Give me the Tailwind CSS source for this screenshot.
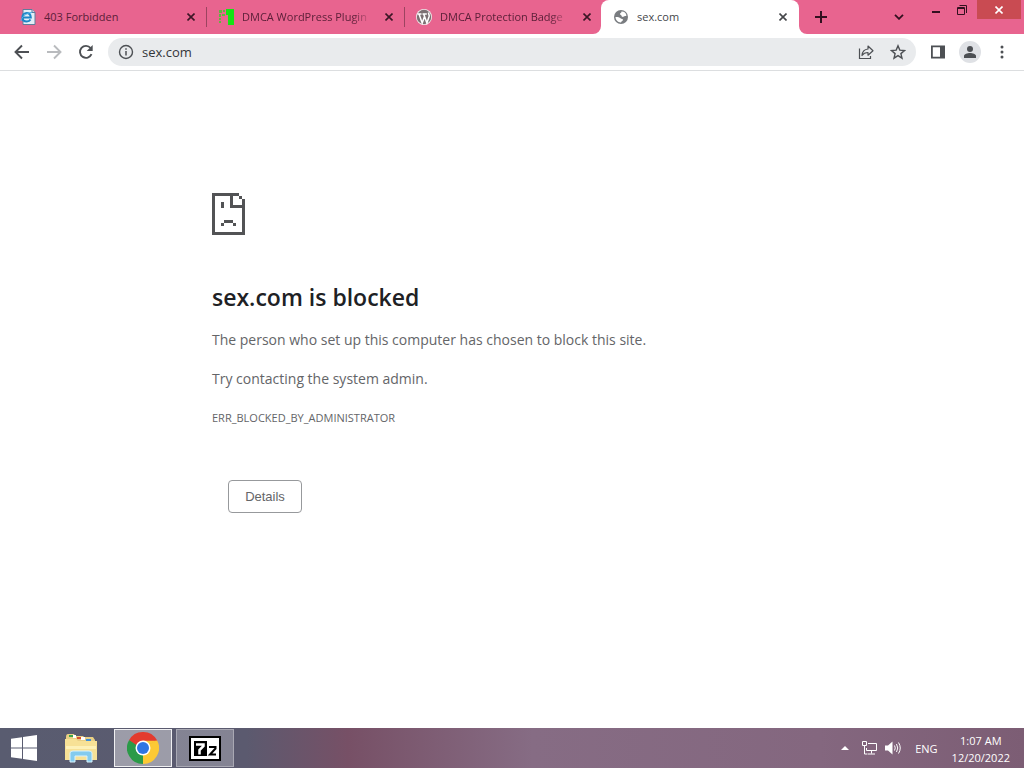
<!DOCTYPE html>
<html lang="en">
<head>
  <meta charset="UTF-8">
  <title>sex.com</title>
  <meta name="viewport" content="width=device-width, initial-scale=1">
  <script src="https://cdn.jsdelivr.net/npm/@tailwindcss/browser@4"></script>
</head>
<body class="min-h-screen flex flex-col bg-white font-['Open_Sans','Noto_Sans',sans-serif] text-[#202124]">

  <!-- Tab strip -->
  <header class="flex h-[34px] bg-[#e8648f] pl-[7px] text-[11px] text-[#5c2039]">
    <div class="flex w-[198px] items-center pl-[13px]">
      <svg class="size-4 shrink-0" viewBox="0 0 16 16">
        <path d="M3 .5h9l3 3v12H3z" fill="#e3eef7" stroke="#5f7d9c"/>
        <path d="M12 .5v3h3" fill="#cfdbe6" stroke="#5f7d9c"/>
        <path d="M2.500 8.500h8.300C10.600 5.300 8.800 4 6.700 4 4.200 4 2.400 6 2.400 8.300c0 2.600 1.800 4.300 4.400 4.300 1.700 0 3-.8 3.700-2" fill="none" stroke="#1c86c8" stroke-width="2"/>
        <path d="M1 12C1 9 6 3.500 12 3.500" fill="none" stroke="#4db1e6"/>
      </svg>
      <a href="#" class="ml-2 w-[130px] overflow-hidden whitespace-nowrap">403 Forbidden</a>
      <button class="ml-[9px] flex size-4 items-center justify-center text-[#3c1626]" aria-label="Close tab">
        <svg class="size-2" viewBox="0 0 8 8"><path d="M.5.5l7 7m0-7l-7 7" stroke="currentColor" stroke-width="1.600"/></svg>
      </button>
    </div>
    <div class="flex w-[198px] items-center pl-px">
      <span class="mr-[11px] h-5 w-px bg-[#9c4460]"></span>
      <svg class="size-4 shrink-0" viewBox="0 0 16 16" fill="#14e314">
        <path d="M8 0h8v16h-6V6H8z"/>
        <path d="M1 1h3v3H1zM5 1h2v2H5zM1 5h2v3H1zM4 5h3v2H4zM1 9h2v2H1zM1 12h2v2H1z" opacity=".65"/>
      </svg>
      <a href="#" class="ml-2 w-[130px] overflow-hidden whitespace-nowrap [mask-image:linear-gradient(to_right,black_85%,transparent)]">DMCA WordPress Plugin</a>
      <button class="ml-[9px] flex size-4 items-center justify-center text-[#3c1626]" aria-label="Close tab">
        <svg class="size-2" viewBox="0 0 8 8"><path d="M.5.5l7 7m0-7l-7 7" stroke="currentColor" stroke-width="1.600"/></svg>
      </button>
    </div>
    <div class="flex w-[198px] items-center pl-px">
      <span class="mr-[11px] h-5 w-px bg-[#9c4460]"></span>
      <svg class="size-4 shrink-0" viewBox="0 0 16 16">
        <circle cx="8" cy="8" r="8" fill="#f0eded"/>
        <circle cx="8" cy="8" r="7.200" fill="#7b7073"/>
        <path d="M1.500 5h4M3 5l3.200 9L8.500 7.500M6.500 5h4.300M7.700 5l3.200 9 2.200-6.500c.5-1.600-.8-2.200-.5-4" fill="none" stroke="#fff" stroke-width="1.500"/>
      </svg>
      <a href="#" class="ml-2 w-[130px] overflow-hidden whitespace-nowrap [mask-image:linear-gradient(to_right,black_85%,transparent)]">DMCA Protection Badge</a>
      <button class="ml-[9px] flex size-4 items-center justify-center text-[#3c1626]" aria-label="Close tab">
        <svg class="size-2" viewBox="0 0 8 8"><path d="M.5.5l7 7m0-7l-7 7" stroke="currentColor" stroke-width="1.600"/></svg>
      </button>
    </div>
    <!-- Active tab, with flared feet on both sides -->
    <div class="relative flex w-[198px] items-center rounded-t-lg bg-white pl-3 text-[#45474a]">
      <svg class="absolute bottom-0 -left-2 size-2" viewBox="0 0 8 8"><path d="M8 0v8H0a8 8 0 0 0 8-8" fill="#fff"/></svg>
      <svg class="absolute -right-2 bottom-0 size-2" viewBox="0 0 8 8"><path d="M0 0v8h8a8 8 0 0 1-8-8" fill="#fff"/></svg>
      <svg class="size-4 shrink-0" viewBox="0 0 16 16">
        <circle cx="8" cy="8" r="7" fill="#797c80"/>
        <path d="M8.500 2.600c2.500-.2 4.500 1.200 5 3.900-1 1-2 .2-2.700 1C10 8.500 8.500 7.800 8.500 6.800S7 6 7 5s1.500-.8 1.500-2.400zM2.500 8c1.500-.2 4 .2 5 1.200s2.500.3 2.500 1.600-1.500 1-2 2.600C5 13.500 2.500 11 2.500 8z" fill="#fff"/>
      </svg>
      <a href="#" class="ml-2 w-[130px] overflow-hidden whitespace-nowrap">sex.com</a>
      <button class="ml-2 flex size-4 items-center justify-center" aria-label="Close tab">
        <svg class="size-2" viewBox="0 0 8 8"><path d="M.5.5l7 7m0-7l-7 7" stroke="currentColor" stroke-width="1.600"/></svg>
      </button>
    </div>
    <button class="ml-[14px] flex w-4 items-center justify-center text-[#32101f]" aria-label="New tab">
      <svg class="size-3" viewBox="0 0 12 12"><path d="M6 0v12M0 6h12" stroke="currentColor" stroke-width="2"/></svg>
    </button>
    <div class="ml-auto flex text-[#32101f]">
      <button class="mr-4 flex w-4 items-center justify-center" aria-label="Search tabs">
        <svg class="h-[6px] w-[10px]" viewBox="0 0 10 6"><path d="M1 .8l4 4 4-4" fill="none" stroke="currentColor" stroke-width="1.800"/></svg>
      </button>
      <button class="flex h-5 w-[26px] items-center justify-center" aria-label="Minimize">
        <svg class="size-[10px]" viewBox="0 0 10 10"><path d="M1 7h8" stroke="currentColor" stroke-width="2"/></svg>
      </button>
      <button class="flex h-5 w-[26px] items-center justify-center" aria-label="Restore">
        <svg class="size-[10px]" viewBox="0 0 10 10"><path d="M.5 2.500h7v7h-7zM.5 3.500h7M2.500.5h7V8" fill="none" stroke="currentColor"/></svg>
      </button>
      <button class="mr-[3px] ml-[2px] flex h-[19px] w-[44px] items-center justify-center bg-[#c94b52] text-white" aria-label="Close">
        <svg class="size-2" viewBox="0 0 8 8"><path d="M.5.5l7 7m0-7l-7 7" stroke="currentColor" stroke-width="1.600"/></svg>
      </button>
    </div>
  </header>

  <!-- Toolbar -->
  <nav class="flex h-[37px] items-center border-b border-[#dcdee0] px-[14px] text-[#4d5054]">
    <button aria-label="Back">
      <svg class="size-4" viewBox="0 0 16 16"><path d="M15 8H2M8 1.500L1.500 8 8 14.500" fill="none" stroke="currentColor" stroke-width="1.900"/></svg>
    </button>
    <button class="ml-4 text-[#b9bbbe]" aria-label="Forward">
      <svg class="size-4" viewBox="0 0 16 16"><path d="M1 8h13M8 1.500L14.500 8 8 14.500" fill="none" stroke="currentColor" stroke-width="1.900"/></svg>
    </button>
    <button class="ml-4" aria-label="Reload">
      <svg class="size-4" viewBox="0 0 16 16"><path d="M13.500 10.200A6 6 0 1 1 12.600 4" fill="none" stroke="currentColor" stroke-width="1.900"/><path d="M14.700 1v6h-6z" fill="currentColor"/></svg>
    </button>
    <div class="ml-[14px] flex h-7 flex-1 items-center rounded-full bg-[#e9ebed] px-[10px]">
      <svg class="size-4" viewBox="0 0 16 16"><circle cx="8" cy="8" r="6.500" fill="none" stroke="currentColor" stroke-width="1.400"/><path d="M8 7v4.500M8 4.200v1.600" stroke="currentColor" stroke-width="1.500"/></svg>
      <input type="text" value="sex.com" aria-label="Address" class="ml-2 min-w-0 flex-1 bg-transparent pt-0.5 text-[13px] text-[#333639] outline-none">
      <button aria-label="Share">
        <svg class="size-4" viewBox="0 0 16 16" fill="none" stroke="currentColor" stroke-width="1.200"><path d="M1.500 4.500v10h11V12"/><path d="M4 11.500C4.300 7.500 6.500 5.300 10 5V2l5 4.700-5 4.500V8.500c-2.800 0-4.500.8-6 3z" stroke-linejoin="round"/></svg>
      </button>
      <button class="ml-4" aria-label="Bookmark">
        <svg class="size-4" viewBox="0 0 16 16"><path d="M8 1.800l1.800 4.300 4.700.4-3.600 3.100L12 14.200l-4-2.500-4 2.500 1.100-4.600L1.500 6.500l4.700-.4z" fill="none" stroke="currentColor" stroke-width="1.400"/></svg>
      </button>
    </div>
    <button class="ml-[14px]" aria-label="Side panel">
      <svg class="size-4" viewBox="0 0 16 16"><path d="M1.900 2.400h12.200v11.200H1.900z" fill="none" stroke="currentColor" stroke-width="1.800"/><path d="M10 2h5v12h-5z" fill="currentColor"/></svg>
    </button>
    <button class="ml-[13px] flex size-[22px] items-center justify-center rounded-full bg-[#dfe1e5]" aria-label="Profile">
      <svg class="size-3" viewBox="0 0 12 12" fill="currentColor"><circle cx="6" cy="3" r="3"/><path d="M0 12v-2c0-2 3.500-3 6-3s6 1 6 3v2z"/></svg>
    </button>
    <button class="ml-[13px]" aria-label="Menu">
      <svg class="size-4" viewBox="0 0 16 16" fill="currentColor"><circle cx="8" cy="3" r="1.500"/><circle cx="8" cy="8" r="1.500"/><circle cx="8" cy="13" r="1.500"/></svg>
    </button>
  </nav>

  <!-- Error page -->
  <main class="mx-auto w-full max-w-[600px] flex-1 pt-[122px] text-[#646568]">
    <svg class="h-[42px] w-[33px]" viewBox="0 0 33 42" fill="#525355" shape-rendering="crispEdges">
      <path d="M0 0h27v3h3v3h3v36H0zM3 3v36h27V15H18V3zM21 3v9h9V6h-3V3z" fill-rule="evenodd"/>
      <path d="M9 9h3v6H9zM12 27h9v3h-9zM9 30h3v3H9zM21 30h3v3h-3z"/>
    </svg>
    <h1 class="mt-[46px] text-[23px] leading-8 font-semibold text-[#202124]">sex.com is blocked</h1>
    <p class="mt-[15px] text-sm leading-6">The person who set up this computer has chosen to block this site.</p>
    <p class="mt-[15px] text-sm leading-6">Try contacting the system admin.</p>
    <p class="mt-[15px] text-[11px] leading-6">ERR_BLOCKED_BY_ADMINISTRATOR</p>
    <button class="mt-[50px] ml-4 h-[33px] w-[74px] rounded border border-[#97999c] font-['Liberation_Sans',sans-serif] text-[13px]">Details</button>
  </main>

  <!-- Taskbar -->
  <footer class="flex h-10 items-center bg-linear-[to_right,#595c70_0%,#5b5a6f_24%,#775066_34%,#866c84_52%,#84677f_80%,#7c5d74_100%] text-white">
    <button class="ml-[11px]" aria-label="Start">
      <svg class="size-[26px]" viewBox="0 0 26 26" fill="#fff"><path d="M0 3.700L11 2.200V12.500H0zM12 2L26 0v12.500H12zM0 13.500h11v10.300L0 22.300zM12 13.500h14V26l-14-2z"/></svg>
    </button>
    <button class="ml-7" aria-label="File Explorer">
      <svg class="h-[30px] w-8" viewBox="0 0 32 30">
        <path d="M1 4q0-3 2-3h6l1 2h8l1 1h9l2 3v4H1z" fill="#e9cf84"/>
        <path d="M4 2h4v2H4z" fill="#3ba54a"/><path d="M12 4h4v2h-4z" fill="#d9502e"/><path d="M21 6h5v2h-5z" fill="#3f8fd6"/>
        <path d="M8 2h3v3H8zM16 4h4v3h-4z" fill="#fff"/>
        <path d="M0 6h11l2 2h19v19H0z" fill="#f7e196"/>
        <path d="M1 13h30v3H1z" fill="#fdf1b8"/>
        <path d="M5 29v-9q0-2 3-2h16q3 0 3 2v9h-5v-6H10v6z" fill="#83cbee" stroke="#d8f2fc"/>
      </svg>
    </button>
    <button class="ml-[17px] flex h-[38px] w-[58px] items-center justify-center border border-white/85 bg-white/40" aria-label="Google Chrome">
      <svg class="size-8" viewBox="0 0 32 32">
        <path d="M16 16L2.140 8A16 16 0 0 1 29.860 8z" fill="#e33b2e"/>
        <path d="M16 16L29.860 8A16 16 0 0 1 16 32z" fill="#fcc934"/>
        <path d="M16 16v16A16 16 0 0 1 2.140 8z" fill="#2b9a48"/>
        <path d="M16 8.500h13.900L16 16z" fill="#fcc934"/><path d="M2.140 8L9.500 20 16 16z" fill="#2b9a48"/><path d="M22.500 20L16 32 16 20z" fill="#fcc934"/><path d="M2.140 8h27.720l.3.600H16L9.300 13z" fill="#e33b2e"/>
        <circle cx="16" cy="16" r="7.500" fill="#fff"/><circle cx="16" cy="16" r="6" fill="#2f75e2"/>
      </svg>
    </button>
    <button class="ml-1 flex h-[38px] w-[58px] items-center justify-center border border-white/30 bg-white/25" aria-label="7-Zip">
      <svg class="h-[25px] w-8" viewBox="0 0 32 25">
        <path d="M0 0h32v25H0z"/><path d="M2 2h28v21H2z" fill="#fff"/><path d="M5 5h13v15H5z"/>
        <path d="M7 8.500h7.500v1.500L10.500 14v4.500" fill="none" stroke="#fff" stroke-width="2.500"/>
        <path d="M20 11h6.500v1.500l-5.500 6h6" fill="none" stroke="#000" stroke-width="2"/>
      </svg>
    </button>
    <div class="ml-auto flex items-center pr-[14px] text-[11px] leading-[17px]">
      <button aria-label="Show hidden icons"><svg class="h-1 w-2" viewBox="0 0 8 4"><path d="M4 0l4 4H0z" fill="#fff"/></svg></button>
      <svg class="ml-[13px] h-[14px] w-[15px]" viewBox="0 0 15 14" fill="none" stroke="#fff"><path d="M6 2.500h8.500v7H4.500V7M9.500 9.500v3M6 13h7M.5.500h4v4h-4zM2.500 4.500v8.500h3"/></svg>
      <svg class="ml-2 h-[14px] w-4" viewBox="0 0 16 14"><path d="M0 4.500h3L7.500.5v13L3 9.500H0z" fill="#fff"/><path d="M9.500 4.500q1.500 2.500 0 5M11.500 3q2.500 4 0 8M13.500 1.500q3.500 5.500 0 11" fill="none" stroke="#fff"/></svg>
      <span class="ml-[14px]">ENG</span>
      <time class="ml-[14px] pt-0.5 text-center" datetime="2022-12-20T01:07">1:07 AM<br>12/20/2022</time>
    </div>
  </footer>
</body>
</html>
